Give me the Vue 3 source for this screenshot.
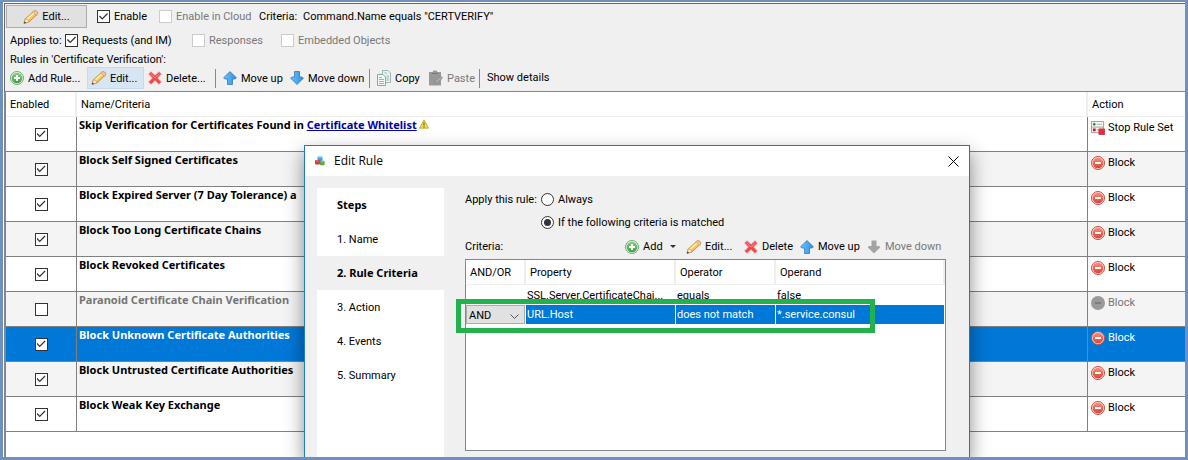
<script setup>
import { ref } from 'vue'

const rules = ref([
  { name: 'Skip Verification for Certificates Found in', link: 'Certificate Whitelist', enabled: true, action: 'Stop Rule Set', icon: 'stop' },
  { name: 'Block Self Signed Certificates', enabled: true, action: 'Block', icon: 'block' },
  { name: 'Block Expired Server (7 Day Tolerance) a', enabled: true, action: 'Block', icon: 'block' },
  { name: 'Block Too Long Certificate Chains', enabled: true, action: 'Block', icon: 'block' },
  { name: 'Block Revoked Certificates', enabled: true, action: 'Block', icon: 'block' },
  { name: 'Paranoid Certificate Chain Verification', enabled: false, action: 'Block', icon: 'blockoff' },
  { name: 'Block Unknown Certificate Authorities', enabled: true, selected: true, action: 'Block', icon: 'block' },
  { name: 'Block Untrusted Certificate Authorities', enabled: true, action: 'Block', icon: 'block' },
  { name: 'Block Weak Key Exchange', enabled: true, action: 'Block', icon: 'block' },
])
const steps = ['1. Name', '2. Rule Criteria', '3. Action', '4. Events', '5. Summary']
const mode = ref('criteria')
const joiner = ref('AND')
</script>

<template>
  <div class="window">
    <svg class="sprite" aria-hidden="true">
      <defs>
        <linearGradient id="gGreen" x1="0" y1="0" x2="0" y2="1"><stop offset="0" stop-color="#8fd08a" /><stop offset="1" stop-color="#3f9e45" /></linearGradient>
        <linearGradient id="gRed" x1="0" y1="0" x2="0" y2="1"><stop offset="0" stop-color="#f5907c" /><stop offset="1" stop-color="#e04038" /></linearGradient>
        <linearGradient id="gBlue" x1="0" y1="0" x2="1" y2="0"><stop offset="0" stop-color="#6cc4fa" /><stop offset="1" stop-color="#2c8fe6" /></linearGradient>
        <linearGradient id="gPen" x1="0" y1="0" x2="1" y2="1"><stop offset="0.3" stop-color="#fff0a8" /><stop offset="0.7" stop-color="#f0ae30" /></linearGradient>
        <symbol id="i-add" viewBox="0 0 14 14">
          <circle cx="7" cy="7" r="6.5" fill="#dff0dc" stroke="#6fb070" />
          <circle cx="7" cy="7" r="5.3" fill="url(#gGreen)" />
          <path d="M7 4v6M4 7h6" stroke="#fff" stroke-width="2" />
        </symbol>
        <symbol id="i-pencil" viewBox="0 0 16 14">
          <path d="M1 13.4 2.3 8.8 10.6 1.3Q12 .2 13.6 1.2 15.3 2.4 14.4 4.2L6 11.8Z" fill="url(#gPen)" stroke="#b98338" stroke-width=".8" />
          <path d="M2.3 8.8 1 13.4 6 11.8Q5.8 9 2.3 8.8Z" fill="#fbe8cf" stroke="#b98350" stroke-width=".6" />
          <path d="m1 13.4.5-2 1.6 1.3Z" fill="#333" />
          <path d="M10.6 1.3Q12 .2 13.6 1.2 15.3 2.4 14.4 4.2L13 5.5Q12.5 3 9.4 2.4Z" fill="#f7c6a0" stroke="#c4834a" stroke-width=".5" />
          <path d="m4.5 9 6.5-5.8" stroke="#fff6c8" />
        </symbol>
        <symbol id="i-delete" viewBox="0 0 14 14">
          <path d="M3 .8 7 4.6 11 .8 13.3 3 9.5 7l3.8 4L11 13.3 7 9.4 3 13.3.7 11l3.8-4L.7 3Z" fill="#f2474a" stroke="#e88a8a" stroke-width=".8" />
          <path d="m2.5 2.8 4.5 4.3 4.5-4.3" fill="none" stroke="#ff8d8d" />
        </symbol>
        <symbol id="i-up" viewBox="0 0 14 14">
          <path d="M7 .6 13.4 6.8 12 8H9.5v5.5h-5V8H2L.6 6.8Z" fill="url(#gBlue)" stroke="#3579b8" stroke-width=".8" />
        </symbol>
        <symbol id="i-down" viewBox="0 0 14 14">
          <path d="M7 13.4.6 7.2 2 6h2.5V.5h5V6H12l1.4 1.2Z" fill="url(#gBlue)" stroke="#3579b8" stroke-width=".8" />
        </symbol>
        <symbol id="i-downoff" viewBox="0 0 14 14">
          <path d="M7 13.4.6 7.2 2 6h2.5V.5h5V6H12l1.4 1.2Z" fill="#a3a3a3" />
        </symbol>
        <symbol id="i-copy" viewBox="0 0 14 16">
          <path d="M5.5.5H11L13.5 3v9.5h-8Z" fill="#e9f3f1" stroke="#9ab8b2" />
          <path d="M.5 4.5H6L8.5 7v8.5h-8Z" fill="#f3f9f8" stroke="#86a8a2" />
          <path d="M2 7.5h3M2 9.5h5M2 11.5h5M2 13.5h5M9.5 6h2.5M9.5 8h2.5M9.5 10h2.5M7.5 3h2.5" stroke="#90b8b0" />
        </symbol>
        <symbol id="i-paste" viewBox="0 0 14 16">
          <path d="M0 2h3.5L4.5.5h3L8.5 2H12v13.5H0Z" fill="#999" />
          <path d="M3 3.5h6" stroke="#777" />
          <path d="m5.5 13.5.8-3L11.5 6l2 2-5 4.8Z" fill="#a9a9a9" stroke="#858585" stroke-width=".8" />
        </symbol>
        <symbol id="i-block" viewBox="0 0 14 14">
          <circle cx="7" cy="7" r="6.5" fill="#fbd9d0" stroke="#c94c40" />
          <circle cx="7" cy="7" r="5.3" fill="url(#gRed)" />
          <path d="M4 7h6" stroke="#fff" stroke-width="2" />
        </symbol>
        <symbol id="i-blockoff" viewBox="0 0 14 14">
          <circle cx="7" cy="7" r="7" fill="#9a9a9a" />
          <path d="M4 7h6" stroke="#7e7e7e" stroke-width="2" />
        </symbol>
        <symbol id="i-stop" viewBox="0 0 15 15">
          <path d="M.5.5h13v12H.5ZM.5 6.5h13" fill="#fafafa" stroke="#999" />
          <path d="M2 3.5h3M3.5 2v3" stroke="#2f8f3a" stroke-width="1.4" />
          <path d="M6 3.5h6M6 9.5h3" stroke="#aaa" />
          <path d="M2 8h3v3H2Z" fill="#b81f28" />
          <path d="M8.5 8.5h6v6h-6Z" fill="#ee2740" stroke="#c4404c" />
        </symbol>
        <symbol id="i-warn" viewBox="0 0 10 10">
          <path d="M5 .8 9.5 9.2H.5Z" fill="#f3dc4e" stroke="#b99e2c" stroke-width=".8" stroke-linejoin="round" />
          <path d="M5 3.5v3M5 7.3v1.2" stroke="#554a10" />
        </symbol>
        <symbol id="i-cubes" viewBox="0 0 10 10">
          <rect x="2.5" y=".5" width="5" height="4.5" rx="1" fill="#3ba0e4" />
          <rect x="0" y="4" width="5" height="4.5" rx="1" fill="#d23b3b" />
          <rect x="4.8" y="4.8" width="4.8" height="4.4" rx="1" fill="#58a83c" />
          <path d="M3.5 1.5h3M1 5h2.5M6 5.8h2.5" stroke="#fff" stroke-opacity=".45" />
        </symbol>
      </defs>
    </svg>

    <header class="panel">
      <div class="line top">
        <button class="big"><svg class="pen"><use href="#i-pencil" /></svg>Edit...</button>
        <label class="check en"><input type="checkbox" checked />Enable</label>
        <label class="check cloud off"><input type="checkbox" disabled />Enable in Cloud</label>
        <span class="crit">Criteria:</span>
        <span>Command.Name equals "CERTVERIFY"</span>
      </div>
      <div class="line applies">
        <span class="lead">Applies to:</span>
        <label class="check req"><input type="checkbox" checked />Requests (and IM)</label>
        <label class="check resp off"><input type="checkbox" disabled />Responses</label>
        <label class="check off"><input type="checkbox" disabled />Embedded Objects</label>
      </div>
      <div class="line caption">Rules in 'Certificate Verification':</div>
      <div class="line tools">
        <button class="tool w-add"><svg class="ic"><use href="#i-add" /></svg>Add Rule...</button>
        <button class="tool active"><svg class="pen"><use href="#i-pencil" /></svg>Edit...</button>
        <button class="tool w-del"><svg class="ic"><use href="#i-delete" /></svg>Delete...</button>
        <i class="sep"></i>
        <button class="tool w-up"><svg class="ic"><use href="#i-up" /></svg>Move up</button>
        <button class="tool w-down"><svg class="ic"><use href="#i-down" /></svg>Move down</button>
        <i class="sep"></i>
        <button class="tool w-copy"><svg class="ic tall"><use href="#i-copy" /></svg>Copy</button>
        <button class="tool w-paste" disabled><svg class="ic tall"><use href="#i-paste" /></svg>Paste</button>
        <i class="sep"></i>
        <button class="tool w-show">Show details</button>
      </div>
    </header>

    <main class="grid">
      <table class="rules">
        <colgroup><col class="c-en" /><col /><col class="c-act" /></colgroup>
        <thead>
          <tr><th>Enabled</th><th>Name/Criteria</th><th>Action</th></tr>
        </thead>
        <tbody>
          <tr v-for="r in rules" :key="r.name" :class="{ sel: r.selected, dim: !r.enabled }">
            <td class="mid"><input v-model="r.enabled" type="checkbox" :aria-label="r.name" /></td>
            <td class="name">
              {{ r.name }}<template v-if="r.link">{{ ' ' }}<a href="#">{{ r.link }}</a><svg class="warn"><use href="#i-warn" /></svg></template>
            </td>
            <td><span class="act"><svg class="ic"><use :href="'#i-' + r.icon" /></svg>{{ r.action }}</span></td>
          </tr>
        </tbody>
      </table>
    </main>

    <section class="dialog" role="dialog" aria-labelledby="dlg-title">
      <div class="title">
        <svg class="app"><use href="#i-cubes" /></svg>
        <span id="dlg-title">Edit Rule</span>
        <button class="close" aria-label="Close"><svg viewBox="0 0 11 11"><path d="m.5.5 10 10m0-10-10 10" stroke="#000" fill="none" /></svg></button>
      </div>
      <div class="body">
        <nav class="steps">
          <strong>Steps</strong>
          <span v-for="(s, i) in steps" :key="s" :class="{ current: i === 1 }">{{ s }}</span>
        </nav>
        <div class="form">
          <div class="apply">
            <span>Apply this rule:</span>
            <label><input v-model="mode" type="radio" name="mode" value="always" />Always</label>
            <label class="second"><input v-model="mode" type="radio" name="mode" value="criteria" />If the following criteria is matched</label>
          </div>
          <div class="ctools">
            <span class="grow">Criteria:</span>
            <button class="tool d-add"><svg class="ic"><use href="#i-add" /></svg>Add<i class="caret"></i></button>
            <button class="tool d-edit"><svg class="pen"><use href="#i-pencil" /></svg>Edit...</button>
            <button class="tool d-del"><svg class="ic"><use href="#i-delete" /></svg>Delete</button>
            <button class="tool d-up"><svg class="ic"><use href="#i-up" /></svg>Move up</button>
            <button class="tool d-down" disabled><svg class="ic"><use href="#i-downoff" /></svg>Move down</button>
          </div>
          <div class="box">
            <table class="criteria">
              <colgroup><col class="k1" /><col class="k2" /><col class="k3" /><col /></colgroup>
              <thead>
                <tr><th>AND/OR</th><th>Property</th><th>Operator</th><th>Operand</th></tr>
              </thead>
              <tbody>
                <tr><td></td><td>SSL.Server.CertificateChai...</td><td>equals</td><td>false</td></tr>
                <tr class="picked">
                  <td class="join">
                    <select v-model="joiner" aria-label="AND/OR"><option>AND</option><option>OR</option></select>
                    <svg class="chev" viewBox="0 0 9 5"><path d="m.5.5 4 4 4-4" fill="none" stroke="#555" /></svg>
                  </td>
                  <td>URL.Host</td><td>does not match</td><td>*.service.consul</td>
                </tr>
              </tbody>
            </table>
            <div class="highlight"></div>
          </div>
        </div>
      </div>
    </section>
  </div>
</template>

<style>
body { margin: 0; }
</style>

<style scoped>
* { box-sizing: border-box; }
.window {
  position: relative;
  display: flex;
  flex-direction: column;
  min-height: 100vh;
  overflow: hidden;
  border: 3px solid #7091c0;
  border-top-width: 2px;
  background: #fff;
  color: #000;
  font: 11px/17px Roboto, "Open Sans", sans-serif;
  white-space: nowrap;
}
.sprite { position: absolute; width: 0; height: 0; }
button, select { font: inherit; color: inherit; margin: 0; }
svg { flex: none; display: block; }
.ic { width: 14px; height: 14px; margin-right: 4px; }
.tall { height: 16px; }
.pen { width: 16px; height: 14px; margin-right: 3px; }

.panel {
  border-top: 1px solid #696969;
  border-left: 1px solid #696969;
  margin: 1px 0 0 1px;
  padding-left: 5px;
  background: #f0f0f0;
}
.line { display: flex; align-items: center; }
.top { height: 25px; }
.big {
  display: flex;
  align-items: center;
  justify-content: center;
  width: 81px;
  height: 23px;
  margin: 0 10px 0 -4px;
  padding: 0;
  border: 1px solid #adadad;
  background: #e1e1e1;
}
.check { display: flex; align-items: center; gap: 4px; }
.off { color: #787878; }
.en { width: 62px; }
.cloud { width: 100px; }
.crit { width: 44px; }
.applies { height: 22px; }
.lead { width: 55px; }
.req { width: 127px; }
.resp { width: 89px; }
.caption { height: 16px; }
.tools { height: 24px; padding-bottom: 2px; }
.tool {
  display: flex;
  align-items: center;
  flex: none;
  height: 22px;
  padding: 0;
  border: 0;
  background: none;
}
.tool:disabled { color: #787878; }
.w-add { width: 77px; }
.active { width: 57px; padding-left: 3px; border: 1px solid #c0dcf3; background: #d8e6f2; }
.w-del { width: 71px; padding-left: 4px; }
.sep { width: 1px; height: 19px; background: #8a8a8a; }
.w-up { width: 74px; padding-left: 7px; }
.w-down { width: 79px; }
.w-copy { width: 59px; padding-left: 7px; }
.w-paste { width: 50px; }
.w-show { padding: 0 0 2px 7px; }

input[type="checkbox"], input[type="radio"] {
  appearance: none;
  position: relative;
  flex: none;
  width: 13px;
  height: 13px;
  margin: 0;
  border: 1px solid #333;
  background: #fff;
}
input[type="checkbox"]:disabled { border-color: #ccc; }
input[type="checkbox"]:checked::before {
  content: "";
  position: absolute;
  inset: 1px;
  background: #333;
  clip-path: polygon(0 50%, 10% 40%, 36% 66%, 90% 12%, 100% 22%, 36% 86%);
}
input[type="radio"] { border-radius: 50%; }
input[type="radio"]:checked::before {
  content: "";
  position: absolute;
  inset: 2px;
  border-radius: 50%;
  background: #333;
}

.grid {
  flex: 1;
  margin-left: 1px;
  border-top: 1px solid #828790;
  border-left: 2px solid #828790;
  background: #fff;
}
table { width: 100%; table-layout: fixed; border-spacing: 0; }
th, td { padding: 0; text-align: left; font-weight: normal; overflow: hidden; }
th { height: 25px; border-bottom: 1px solid #eee; border-right: 2px solid #eee; background: #fff; }
.c-en { width: 71px; }
.c-act { width: 97px; }
.rules th { padding-left: 4px; }
.rules th:last-child { border-right: 0; }
.rules td {
  height: 35px;
  border-right: 1px solid #808080;
  border-bottom: 1px solid #808080;
  vertical-align: top;
}
.rules td:last-child { border-right: 0; }
.rules tbody tr:nth-child(even) { background: #f4f4f4; }
.rules tr.dim { color: #757575; }
.rules tbody tr.sel { background: #0078d7; color: #fff; }
.rules .mid { text-align: center; vertical-align: middle; }
.mid input { display: block; margin: 0 auto; }
.rules .name, .steps strong, .steps .current { font-family: "Noto Sans", "Open Sans", sans-serif; font-weight: bold; }
.rules .name { padding-left: 2px; line-height: 16px; }
.name a { color: #0000a8; text-decoration: underline; }
.warn { display: inline-block; width: 10px; height: 10px; margin-left: 2px; }
.act { display: flex; align-items: center; padding: 2px 0 0 3px; }
.act .ic { margin-right: 3px; }

.dialog {
  position: absolute;
  top: 143px;
  right: 215px;
  bottom: 0;
  left: 301px;
  display: flex;
  flex-direction: column;
  border: 1px solid #1d79c4;
  border-bottom: 0;
  background: #f0f0f0;
  box-shadow: 0 8px 18px rgba(0, 0, 0, 0.45);
}
.title {
  display: flex;
  align-items: center;
  height: 30px;
  padding: 0 10px;
  background: #fff;
  font: 12px/16px "Open Sans", sans-serif;
}
.app { width: 10px; height: 10px; margin-right: 9px; }
.close { margin-left: auto; padding: 0; border: 0; background: none; }
.close svg { width: 11px; height: 11px; }
.body { flex: 1; display: flex; padding: 12px 23px 0 12px; }
.steps { width: 127px; background: #fff; margin-right: 21px; }
.steps > * { display: block; height: 34px; padding-left: 20px; line-height: 35px; }
.steps strong, .steps .current { line-height: 34px; }
.steps .current { background: #f0f0f0; }
.form { flex: 1; display: flex; flex-direction: column; min-width: 0; padding-bottom: 6px; }
.apply { display: grid; grid-template-columns: 76px auto; grid-auto-rows: 23px; align-items: center; }
.apply label { display: flex; align-items: center; gap: 4px; }
.second { grid-column: 2; }
.ctools { display: flex; align-items: center; height: 25px; }
.grow { flex: 1; }
.d-add { width: 61px; }
.d-edit { width: 58px; }
.d-del { width: 56px; }
.d-up { width: 67px; }
.d-down { width: 79px; }
.caret { margin-left: 7px; border: 3px solid transparent; border-top-color: #333; border-bottom: 0; }
.box { position: relative; flex: 1; border: 1px solid #828790; background: #fff; }
.k1 { width: 60px; }
.k2 { width: 150px; }
.k3 { width: 100px; }
.criteria th { padding-left: 4px; }
.criteria td { height: 20px; padding: 0 1px; border-right: 1px solid #fff; line-height: 19px; }
.criteria .picked td { height: 19px; background: #0078d7; color: #fff; }
.criteria .picked .join { position: relative; padding: 0; background: #fff; color: #000; }
select {
  appearance: none;
  display: block;
  width: 59px;
  height: 19px;
  padding: 0 2px;
  border: 1px solid #adadad;
  border-radius: 0;
  background: #e1e1e1;
}
.chev { position: absolute; right: 6px; top: 9px; width: 9px; height: 5px; pointer-events: none; }
.highlight {
  position: absolute;
  top: 39px;
  left: -10px;
  width: 419px;
  height: 34px;
  border: 5px solid #22b14c;
  pointer-events: none;
}
</style>
